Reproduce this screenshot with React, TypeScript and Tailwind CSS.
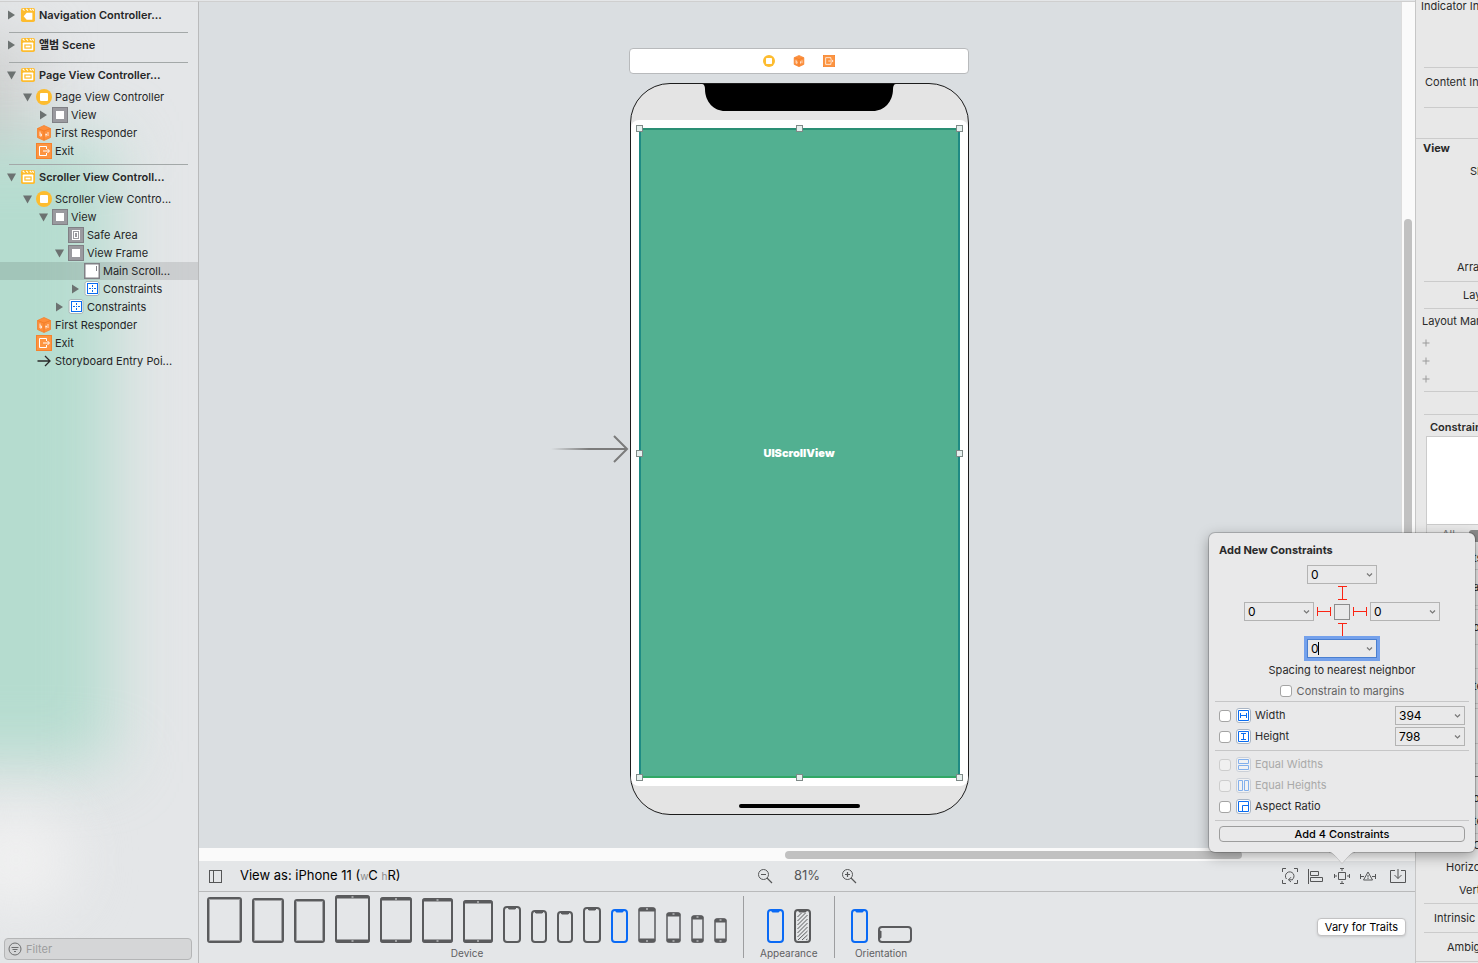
import React from 'react';

type IconName =
  | 'sceneNav'
  | 'scene'
  | 'controller'
  | 'view'
  | 'safeArea'
  | 'scroll'
  | 'constraints'
  | 'responder'
  | 'exit'
  | 'entry';

interface OutlineItem {
  name: string;
  icon: IconName;
  level: number;
  open?: boolean;
  selected?: boolean;
}

interface Scene {
  name: string;
  icon: IconName;
  open: boolean;
  items: OutlineItem[];
}

const scenes: Scene[] = [
  { name: 'Navigation Controller...', icon: 'sceneNav', open: false, items: [] },
  { name: '앨범 Scene', icon: 'scene', open: false, items: [] },
  {
    name: 'Page View Controller...',
    icon: 'scene',
    open: true,
    items: [
      { name: 'Page View Controller', icon: 'controller', level: 0, open: true },
      { name: 'View', icon: 'view', level: 1, open: false },
      { name: 'First Responder', icon: 'responder', level: 0 },
      { name: 'Exit', icon: 'exit', level: 0 },
    ],
  },
  {
    name: 'Scroller View Controll...',
    icon: 'scene',
    open: true,
    items: [
      { name: 'Scroller View Contro...', icon: 'controller', level: 0, open: true },
      { name: 'View', icon: 'view', level: 1, open: true },
      { name: 'Safe Area', icon: 'safeArea', level: 2 },
      { name: 'View Frame', icon: 'view', level: 2, open: true },
      { name: 'Main Scroll...', icon: 'scroll', level: 3, selected: true },
      { name: 'Constraints', icon: 'constraints', level: 3, open: false },
      { name: 'Constraints', icon: 'constraints', level: 2, open: false },
      { name: 'First Responder', icon: 'responder', level: 0 },
      { name: 'Exit', icon: 'exit', level: 0 },
      { name: 'Storyboard Entry Poi...', icon: 'entry', level: 0 },
    ],
  },
];

const indents = ['pl-5', 'pl-9', 'pl-[52px]', 'pl-[68px]'];

function OutlineIcon({ name, className = 'size-4' }: { name: IconName; className?: string }) {
  const drawings: Record<IconName, React.ReactNode> = {
    sceneNav: (
      <>
        <rect x="0" y="0" width="16" height="16" rx="2" fill="#fdbc2f" />
        <path d="M2 1l2 2M6 1l2 2M10 1l2 2M13 1l1.500 2" stroke="#fff" strokeWidth="1.300" />
        <path d="M3 9.500l3.500-4H13v8H6.500z" fill="#fff" />
      </>
    ),
    scene: (
      <>
        <rect x="0" y="0" width="16" height="16" rx="2" fill="#fdbc2f" />
        <path d="M2 1l2 2M6 1l2 2M10 1l2 2M13 1l1.500 2" stroke="#fff" strokeWidth="1.300" />
        <rect x="2" y="5" width="12" height="9" rx="1" fill="#fff" />
        <rect x="4.500" y="8" width="7" height="3.500" fill="none" stroke="#fdbc2f" strokeWidth="1.400" />
      </>
    ),
    controller: (
      <>
        <circle cx="8" cy="8" r="8" fill="#fdbc2f" />
        <rect x="4" y="4" width="8" height="8" rx="1" fill="#fff" />
      </>
    ),
    view: (
      <>
        <rect x="0.500" y="0.500" width="15" height="15" fill="#9a9a9f" stroke="#808085" />
        <rect x="4" y="4" width="8" height="8" fill="#fff" />
      </>
    ),
    safeArea: (
      <>
        <rect x="0.500" y="0.500" width="15" height="15" fill="#9a9a9f" stroke="#808085" />
        <rect x="4.500" y="3.500" width="7" height="9" fill="none" stroke="#fff" />
        <rect x="6.500" y="5.500" width="3" height="5" fill="none" stroke="#fff" />
      </>
    ),
    scroll: (
      <>
        <rect x="0.750" y="0.750" width="14.500" height="14.500" fill="#fff" stroke="#808085" strokeWidth="1.500" />
        <path d="M12.500 3v5" stroke="#808085" />
      </>
    ),
    constraints: (
      <>
        <rect x="1" y="0.500" width="14" height="14" rx="2" fill="#fff" stroke="#a9b6b6" />
        <rect x="3.500" y="2.500" width="10" height="10" fill="none" stroke="#0a6cf0" />
        <path d="M5 7.500h2M10 7.500h2M8.500 4v2M8.500 9v2M8 7.500h1" stroke="#0a6cf0" />
      </>
    ),
    responder: (
      <>
        <path d="M8 0.500l6.500 3v9L8 15.500l-6.500-3v-9z" fill="#fd8f3c" stroke="#f5822c" strokeWidth="0.800" />
        <path d="M1.500 3.500L8 6l6.500-2.500M8 6v9" stroke="#f07a24" strokeWidth="0.800" fill="none" />
        <path d="M4 6.500v4.500h1.500v-2H4M10 8.500v3M9.500 9.500h1.500M12 7v4" stroke="#fff" strokeWidth="0.900" fill="none" opacity="0.850" />
      </>
    ),
    exit: (
      <>
        <rect x="0.500" y="0.500" width="15" height="15" fill="#fd9440" stroke="#f5822c" />
        <path d="M10.500 6V3.500h-7v9h7V10" stroke="#fff" fill="none" />
        <path d="M7 8h6M11.500 6l2 2-2 2" stroke="#fff" fill="none" />
      </>
    ),
    entry: <path d="M1.500 8h12.500M9 3l5 5-5 5" stroke="#2a2a2a" strokeWidth="1.300" fill="none" />,
  };

  return (
    <svg className={`${className} shrink-0`} viewBox="0 0 16 16">
      {drawings[name]}
    </svg>
  );
}

function Disclosure({ open }: { open?: boolean }) {
  return (
    <svg className="h-4 w-4 shrink-0" viewBox="0 0 16 16" fill="#6c7271">
      {open === true && <path d="M3 4.500h9l-4.500 8z" />}
      {open === false && <path d="M4 3.500v9l7-4.500z" />}
    </svg>
  );
}

function Sidebar() {
  return (
    <aside className="relative flex w-[199px] shrink-0 flex-col overflow-hidden border-t border-r border-t-[#cfcfcf] border-r-[#b9babb] bg-[#e4e6e8]">
      {/* Desktop colours showing through the translucent panel */}
      <div className="absolute top-10 -left-24 h-36 w-32 bg-[#cdcfce] blur-[30px]" />
      <div className="absolute top-[140px] -left-24 h-[620px] w-[208px] bg-[#b5dccf] blur-[32px]" />
      <div className="absolute top-[810px] -left-10 h-24 w-28 rounded-full bg-[#f1f1f1] blur-[30px]" />

      <nav className="relative flex-1">
        {scenes.map((scene, index) => (
          <div key={scene.name} className="relative pb-1">
            {index > 0 && <div className="absolute top-0 right-[10px] left-[9px] h-px bg-[#a3a8a8]" />}
            <div className="flex h-[26px] items-center pl-1">
              <Disclosure open={scene.open} />
              <OutlineIcon name={scene.icon} className="ml-px size-[14px]" />
              <span className="ml-1 text-[11px] font-semibold whitespace-nowrap text-[#252627]">{scene.name}</span>
            </div>
            {scene.items.map((item, i) => (
              <div
                key={i}
                className={`flex h-[18px] items-center ${indents[item.level]} ${item.selected ? 'bg-black/10' : ''}`}
              >
                <Disclosure open={item.open} />
                <OutlineIcon name={item.icon} />
                <span className="ml-[3px] text-[11px] whitespace-nowrap text-[#252627]">{item.name}</span>
              </div>
            ))}
          </div>
        ))}
      </nav>

      <label className="relative mr-[6px] mb-[3px] ml-1 flex h-[22px] items-center gap-1 rounded border border-[#b4b5b6] bg-[#d5d6d7] pl-[3px]">
        <svg className="size-[14px]" viewBox="0 0 14 14" fill="none" stroke="#6d6e6f">
          <circle cx="7" cy="7" r="6" />
          <path d="M3.500 5.500h7M4.500 7.500h5M6 9.500h2" />
        </svg>
        <input
          type="text"
          aria-label="Filter"
          placeholder="Filter"
          className="w-0 flex-1 bg-transparent text-[11px] outline-none placeholder:text-[#9c9d9d]"
        />
      </label>
    </aside>
  );
}

const handles = [
  '-top-[5px] -left-[5px]',
  '-top-[5px] left-1/2 -ml-[3px]',
  '-top-[5px] -right-[5px]',
  'top-1/2 -mt-[3px] -left-[5px]',
  'top-1/2 -mt-[3px] -right-[5px]',
  '-bottom-[5px] -left-[5px]',
  '-bottom-[5px] left-1/2 -ml-[3px]',
  '-bottom-[5px] -right-[5px]',
];

function Canvas() {
  return (
    <div className="flex min-h-0 flex-1 border-t border-[#cfcfcf]">
      <div className="flex min-w-0 flex-1 flex-col items-center gap-[9px] overflow-hidden bg-[#dadee1] pt-[46px] pr-0.5">
        {/* Scene dock */}
        <div className="flex h-[26px] w-[340px] shrink-0 items-center justify-center gap-[18px] rounded border border-[#b8babc] bg-white">
          <OutlineIcon name="controller" className="size-3" />
          <OutlineIcon name="responder" className="size-3" />
          <OutlineIcon name="exit" className="size-3" />
        </div>

        {/* Device */}
        <div className="relative flex h-[732px] w-[339px] shrink-0 flex-col items-center rounded-[40px] border border-[#1c1c1c] bg-[#e4e4e4]">
          <svg className="absolute top-[217px] right-full h-[296px] w-20" viewBox="0 0 80 296" fill="none">
            <defs>
              <linearGradient id="entryFade" x1="0" x2="1" y1="0" y2="0">
                <stop offset="0" stopColor="#7b7b7b" stopOpacity="0" />
                <stop offset="0.500" stopColor="#7b7b7b" />
              </linearGradient>
            </defs>
            <rect x="0" y="147" width="76" height="2" fill="url(#entryFade)" />
            <path d="M63 135l13 13-13 13" stroke="#7b7b7b" strokeWidth="2" />
          </svg>
          <svg className="absolute top-0 h-7 w-[194px]" viewBox="0 0 194 28">
            <path d="M0 0h194c-2 0-3 2-3 5 0 13-9 22-20 22H23C12 27 3 18 3 5 3 2 2 0 0 0z" fill="#000" />
          </svg>
          <div className="mt-9 w-full rounded-lg bg-white p-2">
            <div className="relative flex h-[650px] items-center justify-center border-2 border-t-[#2a8f74] border-r-[#1f8a83] border-b-[#31a866] border-l-[#1f8a83] bg-[#52b091]">
              <span className="text-[11px] font-black text-white">UIScrollView</span>
              {handles.map((position) => (
                <span key={position} className={`absolute size-[7px] border border-[#7f8a88] bg-[#e6f0ee] ${position}`} />
              ))}
            </div>
          </div>
          <div className="mt-[18px] h-1 w-[121px] rounded-full bg-black" />
        </div>
      </div>
      <div className="w-[14px] border-l border-[#dcdcdc] bg-[#fafafa] px-[2px]">
        <div className="h-[25.700%]" />
        <div className="h-[64%] w-2 rounded-full bg-[#c1c1c1]" />
      </div>
    </div>
  );
}

function Combo({ label, value, focused }: { label: string; value: string; focused?: boolean }) {
  return (
    <span
      className={`relative flex h-[19px] w-[70px] shrink-0 items-center border bg-[#e9e9ea] pr-[3px] ${
        focused ? 'border-[#4a7fd0] ring-[3px] ring-[#74a1ec]' : 'border-[#b3b3b3]'
      }`}
    >
      <input
        type="text"
        aria-label={label}
        defaultValue={value}
        className="w-0 flex-1 bg-transparent pl-[3px] text-[12px] text-black outline-none"
      />
      {focused && <span className="absolute top-[2px] left-[10px] h-[13px] w-px bg-black" />}
      <svg className="size-[7px]" viewBox="0 0 7 7" fill="none" stroke="#777" strokeWidth="1.200">
        <path d="M1 2.500l2.500 2.500L6 2.500" />
      </svg>
    </span>
  );
}

function Beam({ horizontal }: { horizontal?: boolean }) {
  return (
    <svg
      className={horizontal ? 'h-[9px] w-[14px]' : 'h-[14px] w-[10px]'}
      viewBox={horizontal ? '0 0 14 9' : '0 0 10 14'}
      fill="none"
      stroke="#fb2413"
    >
      <path d={horizontal ? 'M0.500 0v9M13.500 0v9M0 4.500h14' : 'M1 0.500h9M1 13.500h9M5.500 0v14'} />
    </svg>
  );
}

interface ConstraintOption {
  id: string;
  label: string;
  path: string;
  value?: string;
  disabled?: boolean;
}

const sizeOptions: ConstraintOption[] = [
  { id: 'width', label: 'Width', path: 'M2.500 2.500h10v10h-10zM4.500 5v5M10.500 5v5M5 7.500h5', value: '394' },
  { id: 'height', label: 'Height', path: 'M2.500 2.500h10v10h-10zM5 4.500h5M5 10.500h5M7.500 5v5', value: '798' },
];

const relationOptions: ConstraintOption[] = [
  { id: 'equal-widths', label: 'Equal Widths', path: 'M2.500 2.500h10v4h-10zM2.500 8.500h10v4h-10z', disabled: true },
  { id: 'equal-heights', label: 'Equal Heights', path: 'M2.500 2.500h4v10h-4zM8.500 2.500h4v10h-4z', disabled: true },
  { id: 'aspect-ratio', label: 'Aspect Ratio', path: 'M2.500 2.500h10v10h-10zM12 6.500H6.500V12' },
];

const checkboxStyle =
  'size-3 shrink-0 appearance-none rounded-[3px] border border-[#a4a4a4] bg-white disabled:border-[#cdcdcd] disabled:bg-[#f0f0f0]';

function OptionRow({ option }: { option: ConstraintOption }) {
  return (
    <div className="flex h-[21px] items-center px-[10px]">
      <input id={option.id} type="checkbox" disabled={option.disabled} className={checkboxStyle} />
      <svg
        className={`ml-[5px] size-[15px] ${option.disabled ? 'opacity-45' : ''}`}
        viewBox="0 0 15 15"
        fill="none"
        stroke="#0a6cf0"
      >
        <rect x="0.500" y="0.500" width="14" height="14" rx="2.500" fill="#fff" stroke="#a8b4c4" />
        <path d={option.path} />
      </svg>
      <label
        htmlFor={option.id}
        className={`ml-1 flex-1 text-[11px] ${option.disabled ? 'text-[#a9a9a9]' : 'text-[#2a2a2a]'}`}
      >
        {option.label}
      </label>
      {option.value && <Combo label={`${option.label} value`} value={option.value} />}
    </div>
  );
}

function ConstraintsPopover() {
  return (
    <div className="absolute bottom-8 left-1/2 z-30 w-[266px] -translate-x-1/2 rounded-md bg-[#e9e9ea] pt-2 pb-[10px] text-left text-[11px] text-[#2a2a2a] shadow-[0_0_0_1px_rgba(0,0,0,0.18),0_4px_14px_rgba(0,0,0,0.35)]">
      <h2 className="h-[18px] pl-[10px] leading-[18px] font-bold">Add New Constraints</h2>
      <div className="mt-[6px] flex flex-col items-center gap-0.5">
        <Combo label="Top spacing" value="0" />
        <Beam />
        <div className="flex items-center gap-[3px]">
          <Combo label="Leading spacing" value="0" />
          <Beam horizontal />
          <span className="size-4 border border-[#8c8c8c]" />
          <Beam horizontal />
          <Combo label="Trailing spacing" value="0" />
        </div>
        <Beam />
        <Combo label="Bottom spacing" value="0" focused />
        <p className="h-[21px] leading-[21px]">Spacing to nearest neighbor</p>
      </div>
      <div className="flex h-5 items-center justify-center gap-[5px]">
        <input id="margins" type="checkbox" className={checkboxStyle} />
        <label htmlFor="margins" className="text-[#636363]">
          Constrain to margins
        </label>
      </div>
      <div className="mx-[6px] h-px bg-[#c6c6c7]" />
      <div className="py-[3px]">
        {sizeOptions.map((option) => (
          <OptionRow key={option.id} option={option} />
        ))}
      </div>
      <div className="mx-[6px] h-px bg-[#c6c6c7]" />
      <div className="py-[3px]">
        {relationOptions.map((option) => (
          <OptionRow key={option.id} option={option} />
        ))}
      </div>
      <div className="mx-[6px] h-px bg-[#c6c6c7]" />
      <div className="px-[10px] pt-[5px]">
        <button className="block h-4 w-full rounded border border-[#9d9d9d] text-[11px] leading-[14px] font-medium text-black">
          Add 4 Constraints
        </button>
      </div>
      <svg className="absolute top-full left-1/2 -ml-[13px] h-3 w-[26px]" viewBox="0 0 26 12">
        <path d="M0 0c4 0 6 4 13 12C20 4 22 0 26 0z" fill="#e9e9ea" />
        <path d="M0 0.500c4 0 6 3.500 13 11C20 4 22 0.500 26 0.500" fill="none" stroke="#000" strokeOpacity="0.150" />
      </svg>
    </div>
  );
}

const toolIcon = 'size-4';

function Toolbar() {
  return (
    <div className="relative z-20 grid h-[31px] grid-cols-[1fr_auto_1fr] items-center border-b border-[#b9babb] pr-[9px] pl-[9px]">
      <div className="flex items-center">
        <button aria-label="Show document outline">
          <svg className={toolIcon} viewBox="0 0 16 16" fill="none" stroke="#555657">
            <rect x="1.500" y="2.500" width="12" height="12" />
            <path d="M5.500 2.500v12" />
          </svg>
        </button>
        <span className="ml-4 text-[13px] text-black">
          View as: iPhone 11 (<span className="text-[10px] text-[#8a8a8a]">w</span>C{' '}
          <span className="text-[10px] text-[#8a8a8a]">h</span>R)
        </span>
      </div>

      <div className="flex items-center text-[#555657]">
        <button aria-label="Zoom out">
          <svg className={toolIcon} viewBox="0 0 16 16" fill="none" stroke="currentColor">
            <circle cx="6.500" cy="6.500" r="5" />
            <path d="M10 10l5 5M4 6.500h5" strokeWidth="1.200" />
          </svg>
        </button>
        <span className="w-[68px] text-center text-[13px]">81%</span>
        <button aria-label="Zoom in">
          <svg className={toolIcon} viewBox="0 0 16 16" fill="none" stroke="currentColor">
            <circle cx="6.500" cy="6.500" r="5" />
            <path d="M10 10l5 5M4 6.500h5M6.500 4v5" strokeWidth="1.200" />
          </svg>
        </button>
      </div>

      <div className="flex items-center justify-end gap-[10px] text-[#555657]">
        <button aria-label="Update frames">
          <svg className={toolIcon} viewBox="0 0 16 16" fill="none" stroke="currentColor">
            <path d="M0.500 4V0.500H4M12 0.500h3.500V4M15.500 12v3.500H12M4 15.500H0.500V12" />
            <path d="M4.500 11a4.300 4.300 0 1 1 5.500 0.800M10.500 11.800H6.500M9 9.200l-2.500 2.600L9 14" />
          </svg>
        </button>
        <button aria-label="Align">
          <svg className={toolIcon} viewBox="0 0 16 16" fill="none" stroke="currentColor">
            <path d="M0.500 1v15M2.500 3.500h8v4h-8zM2.500 9.500h12v4h-12z" />
          </svg>
        </button>
        <div className="relative size-4">
          <button aria-label="Add new constraints" className="block">
            <svg className={toolIcon} viewBox="0 0 16 16" fill="none" stroke="currentColor">
              <path d="M4.500 4.500h7v7h-7zM8 0.500v2.500M6 0.500h4M8 13v2.500M6 15.500h4M0.500 8H3M0.500 6v4M13 8h2.500M15.500 6v4" />
            </svg>
          </button>
          <ConstraintsPopover />
        </div>
        <button aria-label="Resolve issues">
          <svg className={toolIcon} viewBox="0 0 16 16" fill="none" stroke="currentColor">
            <path d="M8 4l4.500 8h-9zM0.500 6v5M0.500 8.500h3.500M15.500 6v5M15.500 8.500H12M8 7v2.500M8 10v1" />
          </svg>
        </button>
        <button aria-label="Embed in" className="ml-1">
          <svg className={toolIcon} viewBox="0 0 16 16" fill="none" stroke="currentColor">
            <path d="M5 2.500H0.500v12h15v-12H11M8 1v9.500M4.500 7l3.500 3.500L11.500 7" />
          </svg>
        </button>
      </div>
    </div>
  );
}

type DeviceKind = 'slate' | 'tablet' | 'notch' | 'phone' | 'hatched' | 'landscape';

interface Device {
  kind: DeviceKind;
  w: number;
  h: number;
  active?: boolean;
}

const devices: Device[] = [
  { kind: 'slate', w: 35, h: 46 },
  { kind: 'slate', w: 32, h: 45 },
  { kind: 'slate', w: 31, h: 44 },
  { kind: 'tablet', w: 35, h: 48 },
  { kind: 'tablet', w: 32, h: 46 },
  { kind: 'tablet', w: 31, h: 45 },
  { kind: 'tablet', w: 30, h: 43 },
  { kind: 'notch', w: 18, h: 37 },
  { kind: 'notch', w: 16, h: 33 },
  { kind: 'notch', w: 16, h: 32 },
  { kind: 'notch', w: 18, h: 36 },
  { kind: 'notch', w: 17, h: 34, active: true },
  { kind: 'phone', w: 18, h: 36 },
  { kind: 'phone', w: 15, h: 31 },
  { kind: 'phone', w: 13, h: 28 },
  { kind: 'phone', w: 13, h: 25 },
];

function DeviceIcon({ kind, w, h, active }: Device) {
  const color = active ? '#0a6af5' : '#5a5b5d';
  const bar = kind === 'tablet' ? 3 : 4;
  const hasBars = kind === 'tablet' || kind === 'phone';
  const radius = kind === 'slate' || kind === 'tablet' ? 2 : 3;

  return (
    <button aria-label={`${kind} ${w} by ${h}`} className="shrink-0">
      <svg className="block" width={w} height={h} viewBox={`0 0 ${w} ${h}`} fill="none">
        <rect
          x="1"
          y="1"
          width={w - 2}
          height={h - 2}
          rx={radius}
          stroke={color}
          strokeWidth={kind === 'phone' ? 1.5 : 2}
        />
        {kind === 'slate' && (
          <rect x="2.500" y="2.500" width={w - 5} height={h - 5} stroke="#a2a3a5" strokeWidth="1" />
        )}
        {hasBars && (
          <>
            <rect x="0.500" y="0.500" width={w - 1} height={bar} rx="1.500" fill={color} />
            <rect x="0.500" y={h - bar - 0.5} width={w - 1} height={bar} rx="1.500" fill={color} />
            <path d={`M${w / 2 - 1} 2h2M${w / 2 - 1} ${h - 2}h2`} stroke="#e4e6e8" />
          </>
        )}
        {(kind === 'notch' || kind === 'hatched') && (
          <path d={`M${w / 2 - 4} 1h8v1.500l-1 1h-6l-1-1z`} fill={color} />
        )}
        {kind === 'landscape' && <path d={`M1 ${h / 2 - 4}h1.500l1 1v6l-1 1H1z`} fill={color} />}
        {kind === 'hatched' && (
          <path
            d="M3.500 8l4-4M3.500 12l8-8M3.500 16L13.500 6M3.500 20l10-10M3.500 24l10-10M3.500 28l10-10M4 31l9.500-9M8 31l5.500-5M12 31l1.500-1"
            stroke={color}
            strokeWidth="1"
          />
        )}
      </svg>
    </button>
  );
}

function DeviceGroup({ label, items }: { label: string; items: Device[] }) {
  return (
    <div className="flex flex-col items-center">
      <div className="flex items-end gap-[10px]">
        {items.map((device, i) => (
          <DeviceIcon key={i} {...device} />
        ))}
      </div>
      <span className="mt-[3px] text-[10px] leading-[14px] text-[#5f6062]">{label}</span>
    </div>
  );
}

function DeviceBar() {
  return (
    <div className="flex h-[71px] items-end gap-4 pr-[9px] pb-[3px] pl-2">
      <DeviceGroup label="Device" items={devices} />
      <div className="mb-[2px] h-[62px] w-px bg-[#9d9ea0]" />
      <DeviceGroup
        label="Appearance"
        items={[
          { kind: 'notch', w: 17, h: 34, active: true },
          { kind: 'hatched', w: 17, h: 34 },
        ]}
      />
      <div className="mb-[2px] h-[62px] w-px bg-[#9d9ea0]" />
      <DeviceGroup
        label="Orientation"
        items={[
          { kind: 'notch', w: 17, h: 34, active: true },
          { kind: 'landscape', w: 34, h: 17 },
        ]}
      />
      <button className="mb-6 ml-auto h-[18px] rounded border border-[#c2c2c3] bg-white px-[7px] text-[11px] leading-4 text-black shadow-sm">
        Vary for Traits
      </button>
    </div>
  );
}

function Rule({ className = '' }: { className?: string }) {
  return <div className={`ml-2 h-px shrink-0 bg-[#cbcbcb] ${className}`} />;
}

function Field({ className, children }: { className: string; children: React.ReactNode }) {
  return <div className={`flex shrink-0 items-center whitespace-nowrap ${className}`}>{children}</div>;
}

function Inspector() {
  return (
    <aside className="flex w-[63px] shrink-0 flex-col overflow-hidden border-l border-[#c6c6c6] bg-[#e8e8e8] text-[11px] text-[#2a2a2a]">
      <Field className="h-3 pl-[5px]">Indicator Insets</Field>
      <Rule className="mt-[55px]" />
      <Field className="h-7 pl-[9px]">Content Insets</Field>
      <Rule className="mt-[11px]" />
      <div className="mt-[30px] h-px shrink-0 bg-[#cbcbcb]" />
      <Field className="h-[18px] pl-[7px] font-bold">View</Field>
      <Field className="h-7 pl-[54px]">Show</Field>
      <Field className="mt-[69px] h-[27px] pl-[41px]">Arrange</Field>
      <Rule />
      <Field className="h-[26px] pl-[47px]">Layout</Field>
      <Rule />
      <Field className="h-[25px] pl-[6px]">Layout Margins</Field>
      {[0, 1, 2].map((n) => (
        <button key={n} aria-label="Add variation" className="flex h-[18px] shrink-0 items-center pl-[6px]">
          <svg className="size-2" viewBox="0 0 8 8" stroke="#9a9a9a">
            <path d="M0.500 4h7M4 0.500v7" />
          </svg>
        </button>
      ))}
      <Rule className="mt-[3px]" />
      <Rule className="mt-[22px]" />
      <Field className="h-[21px] pt-1 pl-[14px] font-semibold">Constraints</Field>
      <div className="ml-[10px] h-[89px] shrink-0 border border-r-0 border-[#cbcbcb] bg-white" />
      <div className="ml-[10px] flex h-[18px] shrink-0 items-center border-l border-[#cbcbcb] pl-[15px] text-[#777]">
        All
        <span className="mt-1 ml-[14px] h-3 w-10 shrink-0 rounded-[3px] bg-[#8a8a8a]" />
      </div>
      <Field className="mt-1 h-[22px] pl-[57px]">ts</Field>
      <Rule />
      <Field className="h-[35px] pl-[57px]">al</Field>
      <Rule />
      <Rule className="mt-[3px]" />
      <Field className="h-[34px] pl-[57px]">on</Field>
      <Rule />
      <Rule className="mt-[23px]" />
      <Field className="h-[34px] pl-[57px]">te</Field>
      <Rule />
      <Rule className="mt-1" />
      <Rule className="mt-[34px]" />
      <Rule className="mt-[19px]" />
      <div className="mt-3 h-px shrink-0 bg-[#6a6a6a]" />
      <Field className="mt-[10px] h-[22px] pl-[57px]">or</Field>
      <Field className="h-6 pl-[57px]">te</Field>
      <Rule />
      <Field className="h-[22px] pl-[57px]">Co</Field>
      <Field className="h-[22px] pl-[30px]">Horizontal</Field>
      <Field className="h-[25px] pl-[43px]">Vertical</Field>
      <Rule />
      <Field className="h-7 pl-[18px]">Intrinsic Size</Field>
      <Rule />
      <Field className="h-7 pl-[31px]">Ambiguity</Field>
      <div className="h-px shrink-0 bg-[#cbcbcb]" />
    </aside>
  );
}

export default function App() {
  return (
    <div className="flex h-screen w-full overflow-hidden bg-[#e4e6e8] [font-family:Inter,'Noto_Sans_CJK_KR',sans-serif]">
      <div className="flex min-w-0 flex-1 pt-px">
        <Sidebar />
        <main className="flex min-w-0 flex-1 flex-col">
          <Canvas />
          <div className="h-[13px] shrink-0 bg-[#fafafa] pt-[3px] pl-[48.200%]">
            <div className="h-2 w-[72.500%] rounded-full bg-[#c1c1c1]" />
          </div>
          <Toolbar />
          <DeviceBar />
        </main>
      </div>
      <Inspector />
    </div>
  );
}
